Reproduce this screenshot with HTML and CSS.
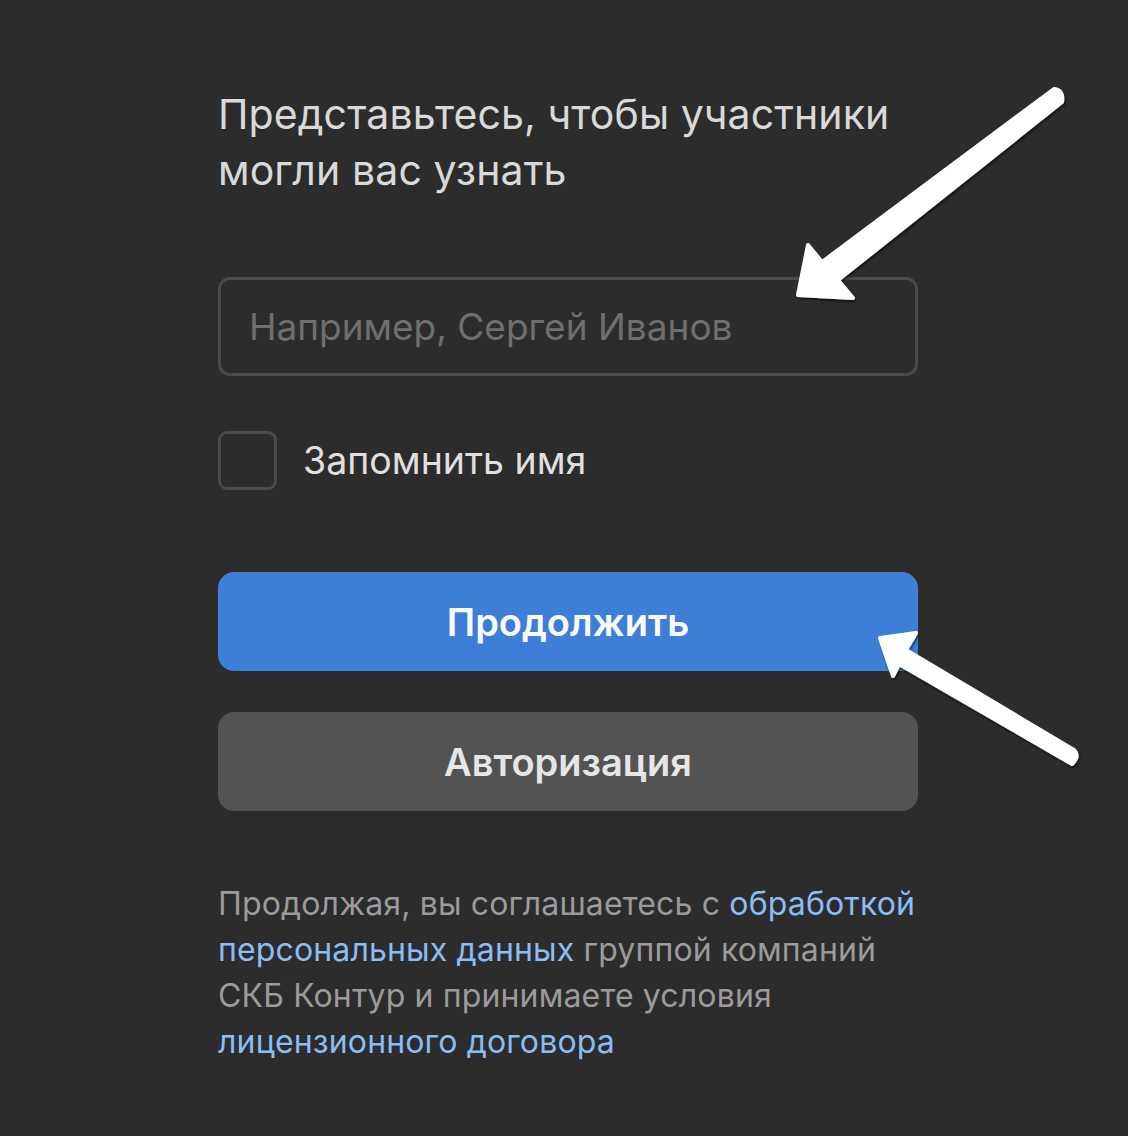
FILE: index.html
```html
<!DOCTYPE html>
<html lang="ru">
<head>
    <meta charset="UTF-8">
    <meta name="viewport" content="width=device-width, initial-scale=1.0">
    <title>Представьтесь</title>
    <link rel="stylesheet" href="styles.css">
</head>
<body>
    <div class="form">
        <h1 class="title">Представьтесь, чтобы участники могли вас узнать</h1>

        <input class="name-input" type="text" placeholder="Например, Сергей Иванов">

        <label class="remember">
            <span class="checkbox"></span>
            <span>Запомнить имя</span>
        </label>

        <button class="btn btn-primary">Продолжить</button>
        <button class="btn btn-secondary">Авторизация</button>

        <p class="terms">
            Продолжая, вы соглашаетесь с <a href="#">обработкой персональных данных</a> группой компаний СКБ Контур и принимаете условия <a href="#">лицензионного договора</a>
        </p>
    </div>

    <!-- стрелки поверх формы -->
    <svg class="arrows" width="1128" height="1136" viewBox="0 0 1128 1136">
        <defs>
            <filter id="shadow" x="-20%" y="-20%" width="140%" height="140%">
                <feDropShadow dx="1" dy="2" stdDeviation="1" flood-color="#000" flood-opacity="0.6"/>
            </filter>
        </defs>
        <g fill="#fff" stroke="#fff" stroke-linejoin="round" stroke-width="4" filter="url(#shadow)">
            <path d="M1054 89 Q1064 90 1062 102 L838 280 L853 298 L798 295 L808 245 L822 262 Z"/>
            <path d="M1072 764 Q1080 756 1074 750 L906 650 L916 633 L880 638 L893 676 L899 664 Z"/>
        </g>
    </svg>
</body>
</html>
```

FILE: styles.css
```css
/* Общие стили */
body {
    margin: 0;
    background-color: #2c2c2c;
    font-family: Inter, "Noto Sans", sans-serif;
    min-height: 1136px;
    position: relative;
}

.form {
    width: 700px;
    margin-left: 218px;
    padding-top: 86px;
    display: flex;
    flex-direction: column;
}

/* Заголовок */
.title {
    margin: 0 0 79px 0;
    font-size: 41px;
    font-weight: 400;
    line-height: 56px;
    color: #d9d9d9;
    letter-spacing: 0.1px;
}

/* Поле ввода */
.name-input {
    box-sizing: border-box;
    height: 99px;
    padding: 0 28px;
    border: 3px solid #4b4b4b;
    border-radius: 12px;
    background: transparent;
    font-family: inherit;
    font-size: 37px;
    color: #ddd;
    outline: none;
}

.name-input::placeholder {
    color: #6f6f6f;
}

/* Чекбокс */
.remember {
    display: flex;
    align-items: center;
    gap: 26px;
    margin-top: 55px;
    font-size: 37.5px;
    color: #e0e0e0;
}

.checkbox {
    box-sizing: border-box;
    width: 59px;
    height: 59px;
    border: 3px solid #4b4b4b;
    border-radius: 9px;
}

/* Кнопки */
.btn {
    height: 99px;
    border: none;
    border-radius: 16px;
    font-family: inherit;
    font-size: 38px;
    font-weight: 600;
    cursor: pointer;
}

.btn-primary {
    margin-top: 82px;
    background-color: #3d7fd6;
    color: #fafafa;
}

.btn-secondary {
    margin-top: 41px;
    background-color: #525352;
    color: #e6e6e6;
}

/* Текст соглашения */
.terms {
    margin: 70px 0 0 0;
    font-size: 32px;
    line-height: 46px;
    color: #9b9b9b;
    letter-spacing: 0.15px;
}

.terms a {
    color: #8bbcf5;
    text-decoration: none;
}

/* Стрелки */
.arrows {
    position: absolute;
    left: 0;
    top: 0;
    pointer-events: none;
}
```
